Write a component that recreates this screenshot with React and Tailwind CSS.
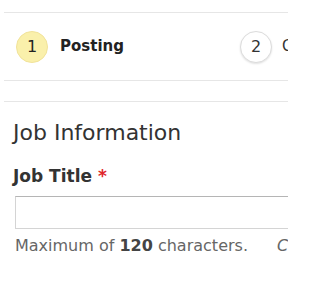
export default function App() {
  return (
    <div className="w-[288px] h-[288px] overflow-hidden bg-white text-[#333] font-['DejaVu_Sans',sans-serif]">
      <div className="ml-[4px] mt-[12px] border-t border-[#e6e6e6]">
        <div className="flex items-center h-[67px] pl-[12px] whitespace-nowrap overflow-hidden">
          <div className="flex items-center w-[224px] shrink-0">
            <span className="flex items-center justify-center w-[32px] h-[32px] rounded-full bg-[#faf0ab] border border-[#f1e39a] text-[16px] text-[#222]">
              1
            </span>
            <span className="ml-[12px] text-[15px] font-semibold text-[#222]">Posting</span>
          </div>
          <div className="flex items-center shrink-0">
            <span className="flex items-center justify-center w-[32px] h-[32px] rounded-full bg-white border border-[#dcdcdc] shadow-[0_1px_2px_rgba(0,0,0,0.12)] text-[16px] text-[#333]">
              2
            </span>
            <span className="ml-[10px] text-[15px] text-[#333]">Company</span>
          </div>
        </div>
        <div className="border-t border-[#e6e6e6] h-[21px]"></div>
        <div className="border-t border-[#e6e6e6]"></div>
      </div>
      <div className="pl-[13px] pt-[18px] overflow-hidden">
        <h2 className="text-[22px] leading-[26px] text-[#333]">Job Information</h2>
        <label className="block mt-[20px] text-[17px] leading-[20px] font-bold text-[#333]">
          Job Title <span className="text-[#e0262b]">*</span>
        </label>
        <div className="flex">
          <div className="ml-[2px] mt-[10px] w-[300px] h-[33px] shrink-0 border border-[#d4d4d4] border-t-[#b5b5b5] bg-white"></div>
        </div>
        <p className="ml-[2px] mt-[7px] whitespace-nowrap text-[16px] leading-[20px] text-[#666]">
          Maximum of <span className="font-bold text-[#444]">120</span> characters.
          <span className="ml-[29px] italic">Characters left</span>
        </p>
      </div>
    </div>
  )
}
